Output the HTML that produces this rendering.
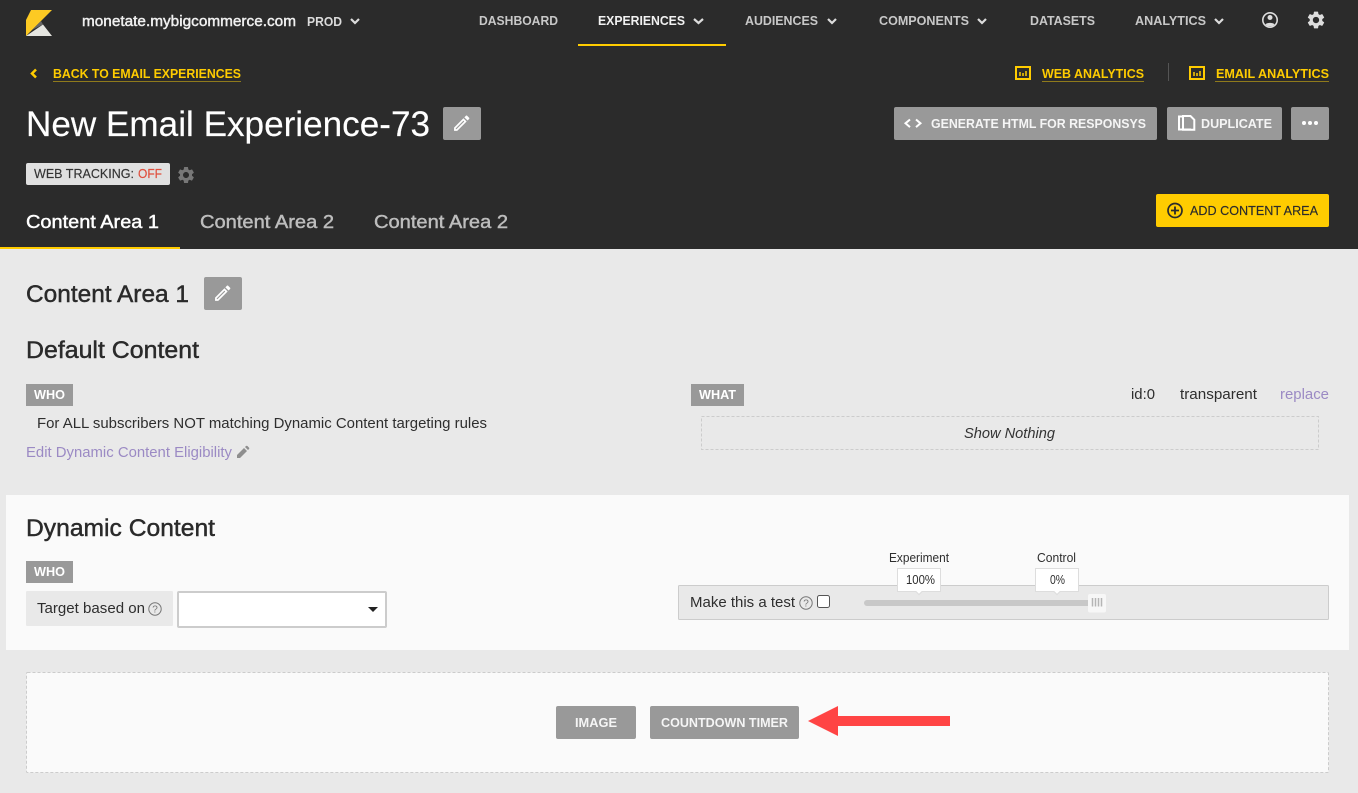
<!DOCTYPE html>
<html lang="en">
<head>
<meta charset="utf-8">
<title>New Email Experience-73</title>
<style>
html,body{margin:0;padding:0;width:1358px;height:793px;overflow:hidden;background:#e9e9e9}
svg{display:block}
text{font-family:"Liberation Sans",Arial,sans-serif;white-space:pre}
.m{stroke:currentColor;stroke-width:.45px}
.s{stroke:currentColor;stroke-width:.15px}
.b{font-weight:bold}
.chev{fill:none;stroke:#dcdcdc;stroke-width:2.2}
</style>
</head>
<body>
<svg xmlns="http://www.w3.org/2000/svg" width="1358" height="793" viewBox="0 0 1358 793">
<defs>
<path id="gear" d="M19.14 12.94c.04-.3.06-.61.06-.94 0-.32-.02-.64-.07-.94l2.03-1.58c.18-.14.23-.41.12-.61l-1.92-3.32c-.12-.22-.37-.29-.59-.22l-2.39.96c-.5-.38-1.03-.7-1.62-.94l-.36-2.54c-.04-.24-.24-.41-.48-.41h-3.84c-.24 0-.43.17-.47.41l-.36 2.54c-.59.24-1.13.57-1.62.94l-2.39-.96c-.22-.08-.47 0-.59.22L2.74 8.87c-.12.21-.08.47.12.61l2.03 1.58c-.05.3-.09.63-.09.94s.02.64.07.94l-2.03 1.58c-.18.14-.23.41-.12.61l1.92 3.32c.12.22.37.29.59.22l2.39-.96c.5.38 1.03.7 1.62.94l.36 2.54c.05.24.24.41.48.41h3.84c.24 0 .44-.17.47-.41l.36-2.54c.59-.24 1.13-.56 1.62-.94l2.39.96c.22.08.47 0 .59-.22l1.92-3.32c.12-.22.07-.47-.12-.61l-2.01-1.58zM12 15.6c-1.98 0-3.6-1.62-3.6-3.6s1.62-3.6 3.6-3.6 3.6 1.62 3.6 3.6-1.62 3.6-3.6 3.6z"/>
<path id="pencil" d="M14.06 9.02l.92.92L5.92 19H5v-.92l9.06-9.06M17.66 3c-.25 0-.51.1-.7.29l-1.83 1.83 3.75 3.75 1.83-1.83c.39-.39.39-1.02 0-1.41l-2.34-2.34c-.2-.2-.45-.29-.71-.29zm-3.6 3.19L3 17.25V21h3.75L17.81 9.94l-3.75-3.75z"/>
</defs>

<!-- page -->
<rect width="1358" height="793" fill="#e9e9e9"/>
<rect width="1358" height="249" fill="#2b2b2b"/>

<!-- logo -->
<polygon points="31,10 52,10 26,36 26,20" fill="#fdca23"/>
<polygon points="26,36 43,24.500 52,36" fill="#e6e6e1"/>
<polygon points="32,30 41,21 43,24.500 36,28" fill="#666"/>

<!-- top nav -->
<text x="82" y="26" font-size="15" fill="#f0f0f0" class="m" color="#f0f0f0" textLength="214" lengthAdjust="spacingAndGlyphs">monetate.mybigcommerce.com</text>
<text x="307" y="26" font-size="12.500" fill="#dcdcdc" class="b" textLength="35" lengthAdjust="spacingAndGlyphs">PROD</text>
<polyline class="chev" points="351,19 355,23 359,19"/>
<text x="479" y="25" font-size="12.500" fill="#c8c8c8" class="b" textLength="79" lengthAdjust="spacingAndGlyphs">DASHBOARD</text>
<text x="598" y="25" font-size="12.500" fill="#f2f2f2" class="b" textLength="87" lengthAdjust="spacingAndGlyphs">EXPERIENCES</text>
<polyline class="chev" points="694,19 698.500,23 703,19"/>
<rect x="578" y="44" width="148" height="2" fill="#fc0"/>
<text x="745" y="25" font-size="12.500" fill="#c8c8c8" class="b" textLength="73" lengthAdjust="spacingAndGlyphs">AUDIENCES</text>
<polyline class="chev" points="828,19 832,23 836,19"/>
<text x="879" y="25" font-size="12.500" fill="#c8c8c8" class="b" textLength="90" lengthAdjust="spacingAndGlyphs">COMPONENTS</text>
<polyline class="chev" points="978,19 982,23 986,19"/>
<text x="1030" y="25" font-size="12.500" fill="#c8c8c8" class="b" textLength="65" lengthAdjust="spacingAndGlyphs">DATASETS</text>
<text x="1135" y="25" font-size="12.500" fill="#c8c8c8" class="b" textLength="71" lengthAdjust="spacingAndGlyphs">ANALYTICS</text>
<polyline class="chev" points="1215,19 1219,23 1223,19"/>
<circle cx="1270" cy="20" r="7.200" fill="none" stroke="#ddd" stroke-width="1.600"/>
<circle cx="1270" cy="17.500" r="2.500" fill="#ddd"/>
<path d="M1265.500 24.500c1-2.200 8-2.200 9 0l-2 1.800h-5z" fill="#ddd"/>
<use href="#gear" transform="translate(1305.500,9.500) scale(.875)" fill="#ddd"/>

<!-- back link row -->
<polyline points="36,69.500 32,73.500 36,77.500" fill="none" stroke="#fc0" stroke-width="2.500"/>
<text x="53" y="78" font-size="13" fill="#fc0" class="b" textLength="188" lengthAdjust="spacingAndGlyphs">BACK TO EMAIL EXPERIENCES</text>
<rect x="53" y="81" width="188" height="1" fill="#8f7a1c"/>

<rect x="1016" y="67" width="14" height="12" fill="none" stroke="#fc0" stroke-width="2"/>
<path d="M1020 72v4M1023 73v3M1026 71v5" stroke="#fc0" stroke-width="1.500" fill="none"/>
<text x="1042" y="78" font-size="13" fill="#fc0" class="b" textLength="102" lengthAdjust="spacingAndGlyphs">WEB ANALYTICS</text>
<rect x="1042" y="81" width="102" height="1" fill="#8f7a1c"/>
<rect x="1168" y="63" width="1" height="18" fill="#555"/>
<rect x="1190" y="67" width="14" height="12" fill="none" stroke="#fc0" stroke-width="2"/>
<path d="M1194 72v4M1197 73v3M1200 71v5" stroke="#fc0" stroke-width="1.500" fill="none"/>
<text x="1216" y="78" font-size="13" fill="#fc0" class="b" textLength="113" lengthAdjust="spacingAndGlyphs">EMAIL ANALYTICS</text>
<rect x="1215" y="81" width="114" height="1" fill="#8f7a1c"/>

<!-- title -->
<text x="26" y="136" font-size="35" fill="#fff" class="s" color="#fff" textLength="404" lengthAdjust="spacingAndGlyphs">New Email Experience-73</text>
<rect x="443" y="107" width="38" height="33" rx="2" fill="#999"/>
<use href="#pencil" transform="translate(451.500,113) scale(.85)" fill="#fff"/>

<!-- action buttons -->
<rect x="894" y="107" width="263" height="33" rx="2" fill="#999"/>
<path d="M910 119.500l-4.500 3.800 4.500 3.800M916 119.500l4.500 3.800-4.500 3.800" fill="none" stroke="#fff" stroke-width="2"/>
<text x="931" y="128" font-size="13" fill="#f5f5f5" class="b" textLength="215" lengthAdjust="spacingAndGlyphs">GENERATE HTML FOR RESPONSYS</text>
<rect x="1167" y="107" width="115" height="33" rx="2" fill="#999"/>
<path d="M1183 116.500h-4v13h12" fill="none" stroke="#fff" stroke-width="2"/>
<path d="M1183 116h7.500l3.800 3.800v10h-11.300z" fill="none" stroke="#fff" stroke-width="2"/>
<text x="1201" y="128" font-size="13" fill="#f5f5f5" class="b" textLength="71" lengthAdjust="spacingAndGlyphs">DUPLICATE</text>
<rect x="1291" y="107" width="38" height="33" rx="2" fill="#999"/>
<circle cx="1304" cy="123" r="2" fill="#fff"/><circle cx="1310" cy="123" r="2" fill="#fff"/><circle cx="1316" cy="123" r="2" fill="#fff"/>

<!-- tracking -->
<rect x="26" y="163" width="144" height="22" rx="2" fill="#e0e0e0"/>
<text x="34" y="178" font-size="12.500" fill="#333" class="s" color="#333" textLength="100" lengthAdjust="spacingAndGlyphs">WEB TRACKING:</text>
<text x="138" y="178" font-size="12.500" fill="#e04e3c" class="s" color="#e04e3c" textLength="24" lengthAdjust="spacingAndGlyphs">OFF</text>
<use href="#gear" transform="translate(176,165) scale(.835)" fill="#777"/>

<!-- tabs -->
<text x="26" y="228" font-size="18.500" fill="#fff" class="m" color="#fff" textLength="133" lengthAdjust="spacingAndGlyphs">Content Area 1</text>
<text x="200" y="228" font-size="18.500" fill="#bdbdbd" class="m" color="#bdbdbd" textLength="134" lengthAdjust="spacingAndGlyphs">Content Area 2</text>
<text x="374" y="228" font-size="18.500" fill="#bdbdbd" class="m" color="#bdbdbd" textLength="134" lengthAdjust="spacingAndGlyphs">Content Area 2</text>
<rect x="0" y="247" width="180" height="2" fill="#fc0"/>

<!-- add content area -->
<rect x="1156" y="194" width="173" height="33" rx="2" fill="#fc0"/>
<circle cx="1175" cy="210.500" r="7" fill="none" stroke="#2b2b2b" stroke-width="1.700"/>
<path d="M1175 206.500v8M1171 210.500h8" stroke="#2b2b2b" stroke-width="1.800"/>
<text x="1190" y="215" font-size="13" fill="#2b2b2b" class="s" color="#2b2b2b" textLength="128" lengthAdjust="spacingAndGlyphs">ADD CONTENT AREA</text>

<!-- content area heading -->
<text x="26" y="302" font-size="24" fill="#2a2a2a" class="m" color="#2a2a2a" textLength="163" lengthAdjust="spacingAndGlyphs">Content Area 1</text>
<rect x="204" y="277" width="38" height="33" rx="2" fill="#999"/>
<use href="#pencil" transform="translate(212.500,283) scale(.85)" fill="#fff"/>

<!-- default content -->
<text x="26" y="358" font-size="24" fill="#2a2a2a" class="m" color="#2a2a2a" textLength="173" lengthAdjust="spacingAndGlyphs">Default Content</text>
<rect x="26" y="384" width="47" height="22" fill="#999"/>
<text x="34" y="399" font-size="12.500" fill="#fff" class="b" textLength="31" lengthAdjust="spacingAndGlyphs">WHO</text>
<text x="37" y="428" font-size="15" fill="#2e2e2e" textLength="450" lengthAdjust="spacingAndGlyphs">For ALL subscribers NOT matching Dynamic Content targeting rules</text>
<text x="26" y="457" font-size="15" fill="#9b8ac4" textLength="206" lengthAdjust="spacingAndGlyphs">Edit Dynamic Content Eligibility</text>
<path d="M237 455V458h3l7-7-3-3zM245 447l3 3 1-1c.4-.4.4-1 0-1.400l-1.600-1.600c-.4-.4-1-.4-1.400 0z" fill="#8e8e8e"/>

<rect x="691" y="384" width="53" height="22" fill="#999"/>
<text x="699" y="399" font-size="12.500" fill="#fff" class="b" textLength="37" lengthAdjust="spacingAndGlyphs">WHAT</text>
<text x="1131" y="399" font-size="15" fill="#2e2e2e" textLength="24" lengthAdjust="spacingAndGlyphs">id:0</text>
<text x="1180" y="399" font-size="15" fill="#2e2e2e" textLength="77" lengthAdjust="spacingAndGlyphs">transparent</text>
<text x="1280" y="399" font-size="15" fill="#9b8ac4" textLength="49" lengthAdjust="spacingAndGlyphs">replace</text>
<rect x="701.500" y="416.500" width="617" height="33" fill="none" stroke="#ccc" stroke-dasharray="3 2"/>
<text x="964" y="438" font-size="14.500" font-style="italic" fill="#333" textLength="91" lengthAdjust="spacingAndGlyphs">Show Nothing</text>

<!-- dynamic content panel -->
<rect x="6" y="495" width="1343" height="155" fill="#fafafa"/>
<text x="26" y="536" font-size="24" fill="#2a2a2a" class="m" color="#2a2a2a" textLength="189" lengthAdjust="spacingAndGlyphs">Dynamic Content</text>
<rect x="26" y="561" width="47" height="22" fill="#999"/>
<text x="34" y="576" font-size="12.500" fill="#fff" class="b" textLength="31" lengthAdjust="spacingAndGlyphs">WHO</text>
<rect x="26" y="591" width="147" height="35" rx="1" fill="#e9e9e9"/>
<text x="37" y="613" font-size="15" fill="#2e2e2e" textLength="108" lengthAdjust="spacingAndGlyphs">Target based on</text>
<circle cx="155" cy="609" r="6.200" fill="none" stroke="#777" stroke-width="1"/>
<text x="155" y="612.500" font-size="10" fill="#777" text-anchor="middle">?</text>
<rect x="178" y="592" width="208" height="35" rx="1" fill="#fff" stroke="#ccc" stroke-width="2"/>
<polygon points="368,607 378,607 373,612" fill="#222"/>

<!-- test bar -->
<rect x="678.500" y="585.500" width="650" height="34" rx="1" fill="#e9e9e9" stroke="#ccc"/>
<text x="690" y="607" font-size="15" fill="#2e2e2e" textLength="105" lengthAdjust="spacingAndGlyphs">Make this a test</text>
<circle cx="806" cy="603" r="6.200" fill="none" stroke="#777" stroke-width="1"/>
<text x="806" y="606.500" font-size="10" fill="#777" text-anchor="middle">?</text>
<rect x="817.500" y="595.500" width="12" height="12" rx="2" fill="#fff" stroke="#555"/>
<rect x="864" y="600" width="230" height="6" rx="3" fill="#c8c8c8"/>
<rect x="1088" y="594" width="18" height="18.500" rx="2" fill="#f7f7f7"/>
<path d="M1092.500 598v8.500M1095.500 598v8.500M1098.500 598v8.500M1101.500 598v8.500" stroke="#b5b5b5" stroke-width="1.500"/>

<text x="889" y="562" font-size="12.500" fill="#2e2e2e" textLength="60" lengthAdjust="spacingAndGlyphs">Experiment</text>
<text x="1037" y="562" font-size="12.500" fill="#2e2e2e" textLength="39" lengthAdjust="spacingAndGlyphs">Control</text>
<path d="M897.500 568.500h43v23h-18.500l-3 3-3-3h-18.500z" fill="#fff" stroke="#ddd"/>
<text x="906" y="584" font-size="13" fill="#2e2e2e" textLength="29" lengthAdjust="spacingAndGlyphs">100%</text>
<path d="M1035.500 568.500h43v23h-18.500l-3 3-3-3h-18.500z" fill="#fff" stroke="#ddd"/>
<text x="1050" y="584" font-size="13" fill="#2e2e2e" textLength="15" lengthAdjust="spacingAndGlyphs">0%</text>

<!-- placeholder -->
<rect x="26.500" y="672.500" width="1302" height="100" rx="1" fill="#fafafa" stroke="#ccc" stroke-dasharray="3 2"/>
<rect x="556" y="706" width="80" height="33" rx="2" fill="#999"/>
<text x="575" y="727" font-size="12.500" fill="#f5f5f5" class="b" textLength="42" lengthAdjust="spacingAndGlyphs">IMAGE</text>
<rect x="650" y="706" width="149" height="33" rx="2" fill="#999"/>
<text x="661" y="727" font-size="12.500" fill="#f5f5f5" class="b" textLength="127" lengthAdjust="spacingAndGlyphs">COUNTDOWN TIMER</text>
<polygon points="808,721 838,706 838,716 950,716 950,726 838,726 838,736" fill="#ff4444"/>
</svg>
</body>
</html>
